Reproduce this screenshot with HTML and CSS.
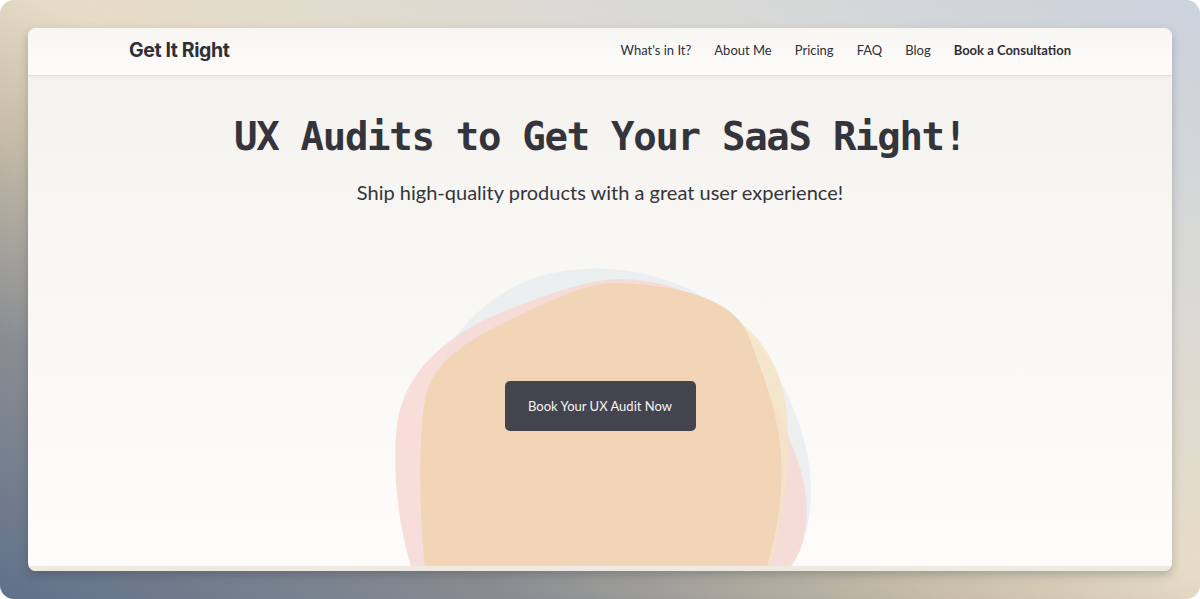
FILE: index.html
```html
<!DOCTYPE html>
<html lang="en">
<head>
<meta charset="utf-8">
<title>Get It Right</title>
<link rel="stylesheet" href="styles.css">
</head>
<body>
<div class="frame">
  <div class="card">
    <header class="topbar">
      <div class="logo">Get It Right</div>
      <nav class="nav">
        <a href="#">What's in It?</a>
        <a href="#">About Me</a>
        <a href="#">Pricing</a>
        <a href="#">FAQ</a>
        <a href="#">Blog</a>
        <a href="#" class="strong">Book a Consultation</a>
      </nav>
    </header>
    <main class="hero">
      <svg class="blobs" width="450" height="306" viewBox="380 260 450 306" aria-hidden="true">
        <path fill="#e7ecee" fill-opacity="0.75" d="M582 269 C660 264 735 300 772 365 C800 415 815 460 810 510 C806 545 795 566 780 570 L440 570 C430 500 420 420 450 345 C480 300 525 272 582 269 Z"/>
        <path fill="#f7d8d3" fill-opacity="0.85" d="M615 279 C700 280 745 320 765 380 C782 430 812 470 806 525 C803 550 795 562 788 570 L412 570 C398 525 392 470 397 425 C404 370 450 330 520 305 C555 292 585 281 615 279 Z"/>
        <path fill="#f6e4c4" fill-opacity="0.8" d="M660 290 C720 300 765 330 780 380 C792 420 790 470 780 520 L770 570 L560 570 L560 300 Z"/>
        <path fill="#f2d5b7" d="M612 283 C680 284 735 300 748 335 C762 372 778 410 781 455 C784 500 775 540 766 570 L425 570 C419 510 418 440 425 400 C432 360 470 338 530 310 C560 297 585 284 612 283 Z"/>
      </svg>
      <h1 class="title">UX Audits to Get Your SaaS Right!</h1>
      <p class="subtitle">Ship high-quality products with a great user experience!</p>
      <a href="#" class="cta">Book Your UX Audit Now</a>
    </main>
    <div class="next-strip"></div>
  </div>
</div>
</body>
</html>
```
FILE: styles.css
```css
* { box-sizing: border-box; }
html, body { margin: 0; padding: 0; background: #ffffff; }
body { width: 1200px; height: 599px; overflow: hidden; }

.frame {
  width: 1200px;
  height: 599px;
  padding: 28px;
  border-radius: 14px;
  background: linear-gradient(to top right, #5f7189 0%, #8a8d92 22%, #c9bfa9 40%, #e7dcc6 52%, #dcdad4 72%, #cbd3dd 100%);
}

.card {
  width: 1144px;
  height: 543px;
  border-radius: 8px;
  overflow: hidden;
  display: flex;
  flex-direction: column;
  background: linear-gradient(to bottom, #f3f1ec 0%, #f8f7f4 40%, #fdfcfb 100%);
  box-shadow: 0 4px 10px rgba(40, 45, 60, 0.25);
}

.topbar {
  height: 48px;
  flex: none;
  display: flex;
  align-items: center;
  justify-content: space-between;
  padding: 0 101px 3px;
  background: linear-gradient(to bottom, #f7f6f3, #fdfcfb);
  border-bottom: 1px solid #e4e1da;
  box-shadow: 0 1px 2px rgba(0,0,0,0.05);
  position: relative;
  z-index: 2;
}

.logo {
  font-family: "Inter", "Liberation Sans", sans-serif;
  font-weight: 700;
  font-size: 19.5px;
  letter-spacing: -0.4px;
  color: #2f2f37;
}

.nav { display: flex; gap: 23px; }
.nav a {
  font-family: "Lato", "Liberation Sans", sans-serif;
  font-size: 13px;
  color: #2f2f37;
  text-decoration: none;
}
.nav a.strong { font-weight: 700; }

.hero {
  flex: 1;
  position: relative;
  display: flex;
  flex-direction: column;
  align-items: center;
}

.blobs {
  position: absolute;
  left: 352px;
  top: 184px;
  z-index: 0;
}

.title {
  position: relative;
  margin: 36px 0 0;
  font-family: "DejaVu Sans Mono", "Liberation Mono", monospace;
  font-weight: 700;
  font-size: 39px;
  letter-spacing: -1.3px;
  line-height: 50px;
  color: #34343c;
}

.subtitle {
  position: relative;
  margin: 16px 0 0;
  font-family: "Lato", "Liberation Sans", sans-serif;
  font-size: 20px;
  line-height: 28px;
  color: #34343c;
}

.cta {
  position: relative;
  margin-top: 175px;
  width: 191px;
  height: 50px;
  display: flex;
  align-items: center;
  justify-content: center;
  background: #44444f;
  border-radius: 5px;
  font-family: "Lato", "Liberation Sans", sans-serif;
  font-size: 13px;
  color: #f5f4f2;
  text-decoration: none;
}

.next-strip {
  height: 5px;
  flex: none;
  background: #eeeae2;
  position: relative;
  z-index: 2;
}
```
